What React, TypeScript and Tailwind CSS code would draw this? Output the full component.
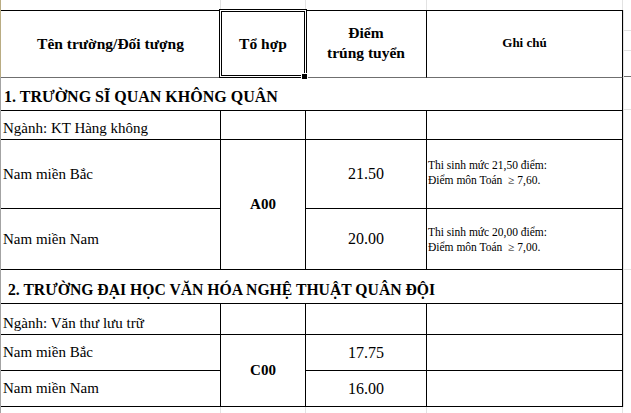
import React from "react";

function Cell({ className = "", children }: { className?: string; children?: React.ReactNode }) {
  return <div className={"border-r border-b border-black " + className}>{children}</div>;
}

function Note({ a, b }: { a: string; b: string }) {
  return (
    <div className="whitespace-pre pl-[1px] text-[11.5px] leading-[15px] text-black">
      <div>{a}</div>
      <div>{b}</div>
    </div>
  );
}

export default function App() {
  return (
    <div className="relative h-[413px] w-[631px] overflow-hidden bg-white font-['Liberation_Serif','Times_New_Roman',serif] text-black">
      {/* top gridline strip */}
      <div className="flex h-[10px]">
        <div className="w-[1px] bg-[#b9ac82]" />
        <div className="w-[220px] border-r border-[#e2e2e2]" />
        <div className="w-[85px] border-r border-[#e2e2e2]" />
        <div className="w-[121px] border-r border-[#e2e2e2]" />
        <div className="w-[196px] border-r border-[#e2e2e2]" />
      </div>

      <div className="flex">
        <div className="flex w-[1px] flex-col">
          <div className="h-[67px] bg-[#b9ac82]" />
          <div className="flex-1 bg-[#a3a3a3]" />
        </div>

        <div className="grid grid-cols-[220px_85px_121px_196px] grid-rows-[67px_33px_29px_69px_61px_34px_31px_36px_36px] border-t border-black">
          {/* header */}
          <Cell className="flex items-center justify-center !border-b-[#6f6f6f] pb-[1px] text-[15.5px] font-bold">
            Tên trường/Đối tượng
          </Cell>
          <Cell className="flex items-center justify-center !border-b-[#6f6f6f] pb-[1px] text-[15.5px] font-bold">
            Tổ hợp
          </Cell>
          <Cell className="flex flex-col items-center justify-center !border-b-[#6f6f6f] pb-[2px] text-[15.5px] font-bold leading-[20px]">
            <div>Điểm</div>
            <div>trúng tuyển</div>
          </Cell>
          <Cell className="flex items-center justify-center !border-b-[#6f6f6f] pb-[2px] text-[13px] font-bold">
            Ghi chú
          </Cell>

          {/* section 1 */}
          <Cell className="col-span-4 flex items-end pb-[1px] pl-[3px] text-[16px] font-bold">
            1. TRƯỜNG SĨ QUAN KHÔNG QUÂN
          </Cell>
          <Cell className="flex items-end pl-[2px] text-[15px]">Ngành: KT Hàng không</Cell>
          <Cell />
          <Cell />
          <Cell />

          <Cell className="flex items-center pl-[2px] text-[15px]">Nam miền Bắc</Cell>
          <Cell className="row-span-2 flex items-center justify-center text-[15px] font-bold">A00</Cell>
          <Cell className="flex items-center justify-center text-[16px]">21.50</Cell>
          <Cell className="flex items-center pb-[2px]">
            <Note a="Thi sinh mức 21,50 điểm:" b="Điểm môn Toán  ≥ 7,60." />
          </Cell>

          <Cell className="flex items-center pl-[2px] text-[15px]">Nam miền Nam</Cell>
          <Cell className="flex items-center justify-center text-[16px]">20.00</Cell>
          <Cell className="flex items-center pt-[2px]">
            <Note a="Thi sinh mức 20,00 điểm:" b="Điểm môn Toán  ≥ 7,00." />
          </Cell>

          {/* section 2 */}
          <Cell className="col-span-4 flex items-end pb-[1px] pl-[7px] text-[15.7px] font-bold">
            2. TRƯỜNG ĐẠI HỌC VĂN HÓA NGHỆ THUẬT QUÂN ĐỘI
          </Cell>
          <Cell className="flex items-end pl-[2px] text-[15px]">Ngành: Văn thư lưu trữ</Cell>
          <Cell />
          <Cell />
          <Cell />

          <Cell className="flex items-center pl-[2px] text-[15px]">Nam miền Bắc</Cell>
          <Cell className="row-span-2 flex items-center justify-center text-[15px] font-bold">C00</Cell>
          <Cell className="flex items-center justify-center text-[16px]">17.75</Cell>
          <Cell />

          <Cell className="flex items-center pl-[2px] text-[15px]">Nam miền Nam</Cell>
          <Cell className="flex items-center justify-center text-[16px]">16.00</Cell>
          <Cell />
        </div>

        {/* gridlines right of the table */}
        <div className="flex flex-1 flex-col border-l border-[#e2e2e2]">
          <div className="h-[21px] border-b border-[#e2e2e2]" />
          <div className="h-[20px] border-b border-[#e2e2e2]" />
          <div className="h-[26px] border-b border-[#6f6f6f]" />
          <div className="h-[33px] border-b border-[#e2e2e2]" />
          <div className="h-[160px] border-b border-[#e2e2e2]" />
        </div>
      </div>

      {/* bottom gridline strip */}
      <div className="flex h-[8px]">
        <div className="w-[1px] bg-[#a3a3a3]" />
        <div className="w-[220px] border-r border-[#e2e2e2]" />
        <div className="w-[85px] border-r border-[#e2e2e2]" />
        <div className="w-[121px] border-r border-[#e2e2e2]" />
        <div className="w-[196px] border-r border-[#e2e2e2]" />
      </div>

      {/* selected cell outline */}
      <div className="pointer-events-none absolute left-[219px] top-[9px] h-[69px] w-[88px] border border-black">
        <div className="h-full w-full border border-white">
          <div className="h-full w-full border border-black" />
        </div>
      </div>
      <div className="absolute left-[302px] top-[74px] h-[5px] w-[5px] bg-black ring-1 ring-white" />
    </div>
  );
}
